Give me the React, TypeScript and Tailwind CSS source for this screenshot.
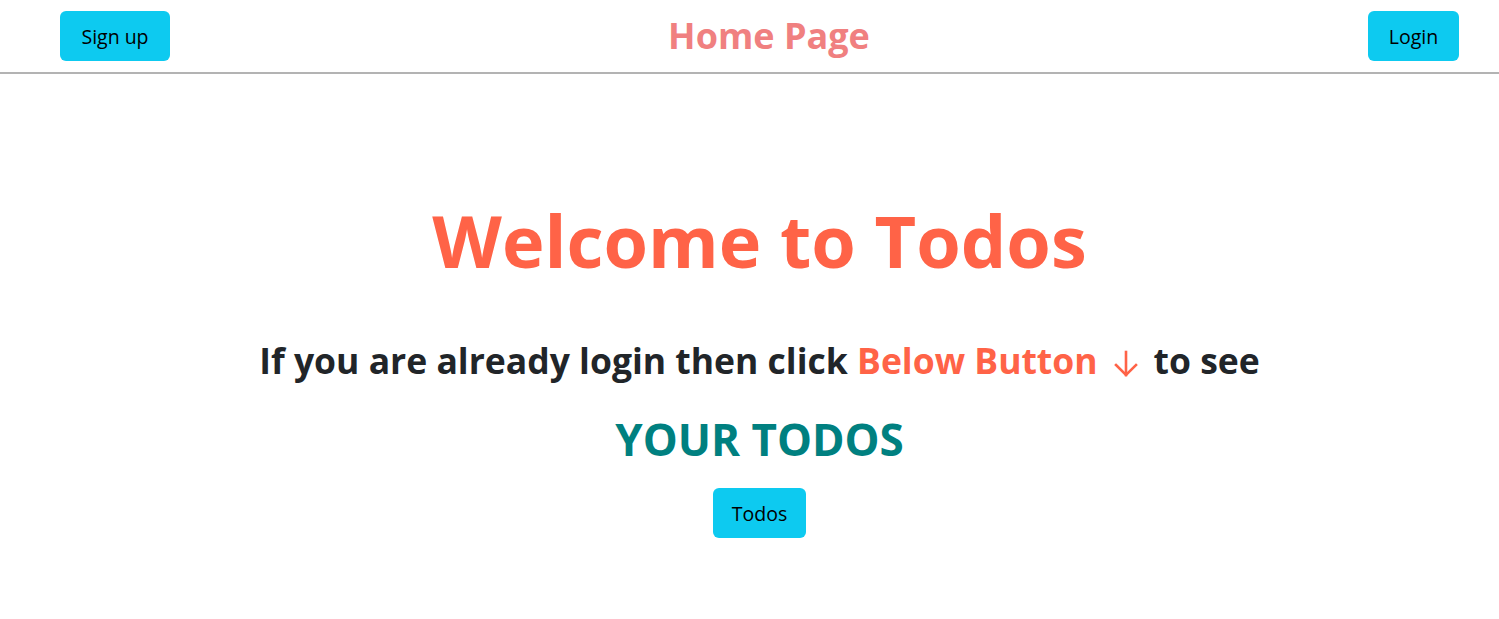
import React from "react";

const font = { fontFamily: '"Open Sans", "Noto Sans", Arial, sans-serif' };

export default function App() {
  return (
    <div className="min-h-screen bg-white" style={font}>
      <header className="flex h-[74px] items-center justify-between border-b-2 border-[#b3b3b3] pl-[60px] pr-[40px]">
        <button className="h-[50px] w-[110px] rounded-[6px] bg-[#0dcaf0] pt-[2px] text-[19.5px] text-black">
          Sign up
        </button>
        <h1 className="text-[36px] font-bold leading-none text-[#f08080]">Home Page</h1>
        <button className="h-[50px] w-[91px] rounded-[6px] bg-[#0dcaf0] pt-[2px] text-[19.5px] text-black">
          Login
        </button>
      </header>
      <main className="flex flex-col items-center pl-[20px] pt-[130px]">
        <h2 className="text-[72px] font-bold leading-none text-[#ff6347]">Welcome to Todos</h2>
        <p className="mt-[67px] flex items-center text-[35.5px] font-bold leading-none text-[#212529]">
          <span>If you are already login then click&nbsp;</span>
          <span className="text-[#ff6347]">Below Button</span>
          <svg
            className="mx-[15px] mt-[6px] h-[28px] w-[26px] text-[#ff6347]"
            viewBox="0 0 26 28"
            fill="none"
            stroke="currentColor"
            strokeWidth="2.6"
            strokeLinecap="square"
          >
            <path d="M13 2v23" />
            <path d="M3 15l10 10 10-10" />
          </svg>
          <span>to see</span>
        </p>
        <h3 className="mt-[38px] text-[44px] font-bold leading-none text-[#008080]">YOUR TODOS</h3>
        <button className="mt-[27px] h-[50px] w-[93px] rounded-[6px] bg-[#0dcaf0] pt-[2px] text-[19.5px] text-black">
          Todos
        </button>
      </main>
    </div>
  );
}
